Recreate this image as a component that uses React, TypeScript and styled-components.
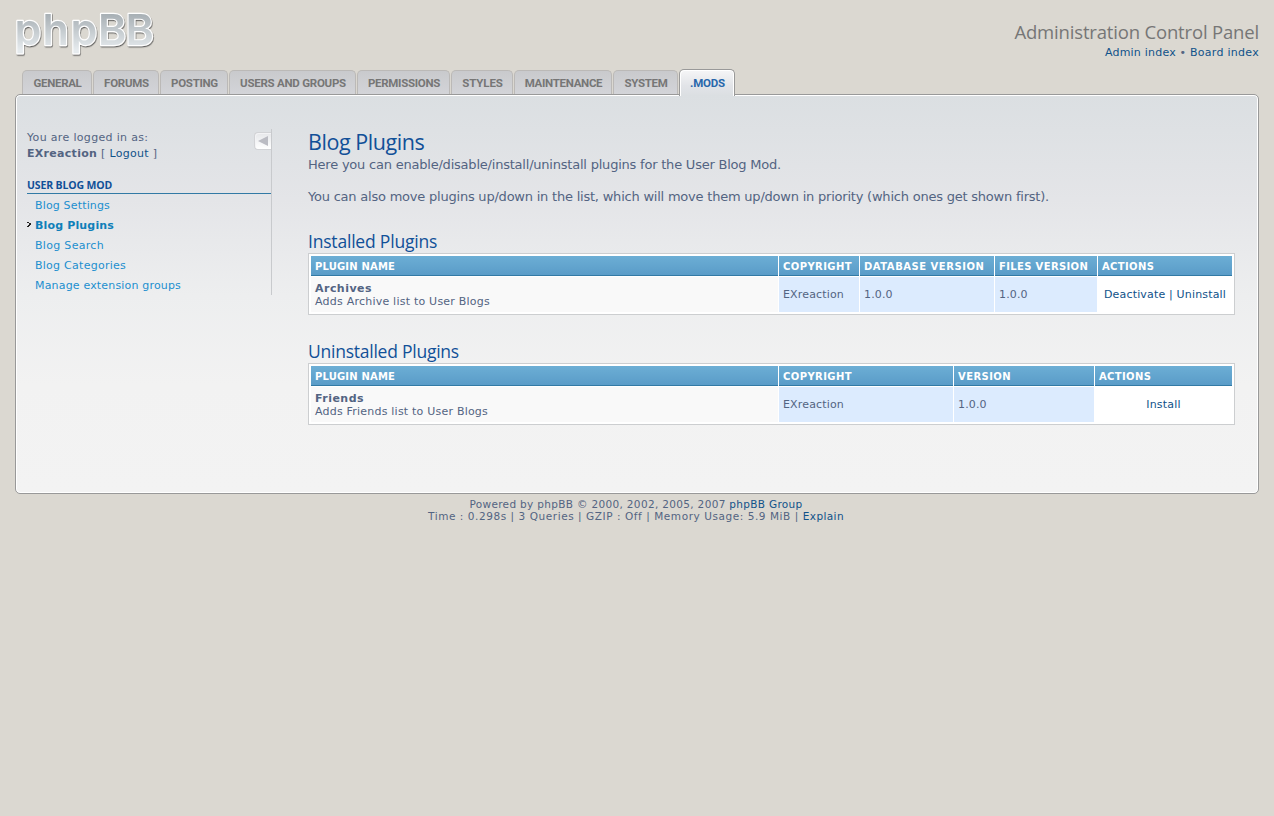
import React from "react";
import styled, { createGlobalStyle, css } from "styled-components";

const verdana = `Verdana, "DejaVu Sans", sans-serif`;
const trebuchet = `"Trebuchet MS", "Open Sans", sans-serif`;

const GlobalStyle = createGlobalStyle`
  * { box-sizing: border-box; }
  body {
    margin: 0;
    background: #dbd8d1;
    color: #536482;
    font: 11px/16px ${verdana};
  }
  h1, h2, h3, p, ul { margin: 0; padding: 0; font-weight: 400; }
  ul { list-style: none; }
`;

interface Tracked {
  $track?: number;
}
const tracking = css<Tracked>`
  letter-spacing: ${({ $track = 0.2 }) => $track}px;
  white-space: nowrap;
`;

const Page = styled.div`
  padding: 0 15px;
`;

const Header = styled.header`
  display: flex;
  justify-content: space-between;
  height: 69px;
`;

const LogoSvg = styled.svg`
  display: block;
  margin: 4px 0 0 -3px;
  overflow: visible;
`;

const HeaderInfo = styled.div`
  padding-top: 21px;
  text-align: right;
`;

const SiteTitle = styled.h1<Tracked>`
  ${tracking}
  height: 24px;
  color: #767676;
  font: 18.5px/22px ${trebuchet};
`;

const HeaderLinks = styled.p<Tracked>`
  ${tracking}
`;

const Link = styled.a<Tracked>`
  ${tracking}
  color: #105289;
  text-decoration: none;
`;

const Tabs = styled.nav`
  display: flex;
  align-items: flex-end;
  gap: 1px;
  height: 25px;
  padding-left: 7px;
`;

const Tab = styled.a<{ $width: number; $active?: boolean } & Tracked>`
  ${tracking}
  position: relative;
  z-index: 1;
  width: ${({ $width }) => $width}px;
  height: 24px;
  padding-left: 1px;
  border: 1px solid #bbb9b7;
  border-bottom: 0;
  border-radius: 5px 5px 0 0;
  background: linear-gradient(#c9cacd, #d3d4d8);
  color: #767676;
  font: 700 11.5px/24px Roboto, Arial, sans-serif;
  text-align: center;
  ${({ $active }) =>
    $active &&
    css`
      height: 27px;
      margin-bottom: -2px;
      border-color: #999;
      background: linear-gradient(#f6f6f7, #e2e4e8 60%, #dbdfe2);
      box-shadow: inset 1px 1px 0 #fff, inset -1px 0 0 #fff;
      color: #2867ab;
      line-height: 26px;
    `}
`;

const Panel = styled.main`
  display: flex;
  height: 400px;
  padding: 33px 22px 0 10px;
  border: 1px solid #999;
  border-radius: 5px;
  background: linear-gradient(#dbdfe2, #e4e5e8 105px, #edeeef 200px, #f2f2f2 290px, #f3f3f3);
  box-shadow: inset 0 0 0 1px #fff;
`;

const Sidebar = styled.aside`
  position: relative;
  width: 246px;
  height: 167px;
  padding: 1px 0 0 1px;
`;

const SidebarInner = styled.div`
  height: 166px;
  padding-top: 1px;
  border-right: 1px solid #c8cacd;
`;

const CollapseButton = styled.button`
  position: absolute;
  top: 4px;
  right: 1px;
  width: 17px;
  height: 18px;
  padding: 0;
  border: 1px solid #d2d3d6;
  border-right: 0;
  border-radius: 4px 0 0 4px;
  background: linear-gradient(#e6e7ea, #fff);
  box-shadow: inset 1px 1px 0 #f3f3f5;
  svg { display: block; margin: 0 0 0 3px; }
`;

const Text = styled.p<Tracked>`
  ${tracking}
`;

const Bold = styled.strong<Tracked>`
  ${tracking}
`;

const MenuHeading = styled.h3<Tracked>`
  ${tracking}
  margin-top: 15px;
  height: 17px;
  border-bottom: 1px solid #327aa5;
  color: #115098;
  font: 700 10.5px/16px Tahoma, "Open Sans", sans-serif;
`;

const Menu = styled.ul`
  padding-top: 2px;
`;

const MenuItem = styled.li<{ $active?: boolean } & Tracked>`
  ${tracking}
  display: flex;
  align-items: center;
  height: 20px;
  padding-left: ${({ $active }) => ($active ? 0 : 8)}px;
  color: ${({ $active }) => ($active ? "#0f7fb9" : "#1c8fcf")};
  font-weight: ${({ $active }) => ($active ? 700 : 400)};
  svg { width: 8px; height: 7px; margin-top: -3px; }
`;

const Content = styled.section`
  flex: 1;
  padding: 1px 0 0 36px;
`;

const PageTitle = styled.h2<Tracked>`
  ${tracking}
  color: #115098;
  font: 21.5px/25px ${trebuchet};
  height: 28px;
`;

const Intro = styled.p<Tracked>`
  ${tracking}
  font-size: 13px;
  margin-bottom: 16px;
`;

const SectionTitle = styled.h3<Tracked>`
  ${tracking}
  margin-top: 27px;
  height: 21px;
  color: #115098;
  font: 17.5px/19px ${trebuchet};
`;

const Table = styled.div<{ $columns: string }>`
  display: grid;
  grid-template-columns: ${({ $columns }) => $columns};
  grid-template-rows: 20px 35px;
  gap: 1px;
  width: 927px;
  padding: 2px;
  border: 1px solid #ccced0;
  background: #fff;
`;

const HeadCell = styled.div<Tracked>`
  ${tracking}
  padding-left: 4px;
  border-bottom: 1px solid #327aa5;
  background: linear-gradient(#6caed5, #5a9cc8);
  color: #fff;
  font-size: 10px;
  font-weight: 700;
  line-height: 21px;
`;

const cellColors = { plain: "#f9f9f9", tinted: "#dcebfe", action: "#fff" };

const Cell = styled.div<{ $kind: keyof typeof cellColors }>`
  display: flex;
  flex-direction: column;
  justify-content: center;
  align-items: ${({ $kind }) => ($kind === "action" ? "center" : "flex-start")};
  padding-left: ${({ $kind }) => ({ plain: 4, tinted: 4, action: 0 })[$kind]}px;
  background: ${({ $kind }) => cellColors[$kind]};
  line-height: 13px;
`;

const Footer = styled.footer`
  padding: 4px 2px 0 0;
  text-align: center;
  font-size: 10.5px;
  line-height: 12px;
`;

const Logo = () => (
  <LogoSvg width="150" height="62" viewBox="12 4 150 62">
    <defs>
      <linearGradient id="silver" gradientUnits="userSpaceOnUse" x1="0" y1="12" x2="0" y2="50">
        <stop offset="0" stopColor="#a4acb1" />
        <stop offset="1" stopColor="#e6ebee" />
      </linearGradient>
      <filter id="drop" x="-10%" y="-10%" width="120%" height="130%">
        <feDropShadow dx="0.6" dy="1.2" stdDeviation="0.7" floodColor="#444" floodOpacity="0.8" />
      </filter>
    </defs>
    <g
      filter="url(#drop)"
      fill="url(#silver)"
      stroke="#fff"
      strokeWidth="2.4"
      strokeLinejoin="round"
      paintOrder="stroke"
      fontFamily="Inter, sans-serif"
      fontWeight="600"
      fontSize="43"
    >
      <text y="44.5">
        <tspan x="14.6">p</tspan>
        <tspan x="42.4">h</tspan>
        <tspan x="70.4">p</tspan>
        <tspan x="98">B</tspan>
        <tspan x="125.6">B</tspan>
      </text>
    </g>
  </LogoSvg>
);

const tabs = [
  { label: "GENERAL", width: 70, track: -0.3 },
  { label: "FORUMS", width: 66, track: -0.25 },
  { label: "POSTING", width: 68, track: -0.3 },
  { label: "USERS AND GROUPS", width: 127, track: -0.25 },
  { label: "PERMISSIONS", width: 93, track: -0.3 },
  { label: "STYLES", width: 62, track: -0.15 },
  { label: "MAINTENANCE", width: 98, track: -0.3 },
  { label: "SYSTEM", width: 65, track: -0.3 },
  { label: ".MODS", width: 56, track: -0.2, active: true },
];

const menu = [
  { label: "Blog Settings", track: 0.16 },
  { label: "Blog Plugins", track: 0.16, active: true },
  { label: "Blog Search", track: 0.31 },
  { label: "Blog Categories", track: 0.26 },
  { label: "Manage extension groups", track: 0.175 },
];

export default function App() {
  return (
    <>
      <GlobalStyle />
      <Page>
        <Header>
          <Logo />
          <HeaderInfo>
            <SiteTitle $track={-0.17}>Administration Control Panel</SiteTitle>
            <HeaderLinks>
              <Link $track={0.214}>Admin index</Link> • <Link $track={0.28}>Board index</Link>
            </HeaderLinks>
          </HeaderInfo>
        </Header>
        <Tabs>
          {tabs.map((t) => (
            <Tab key={t.label} $width={t.width} $track={t.track} $active={t.active}>
              {t.label}
            </Tab>
          ))}
        </Tabs>
        <Panel>
          <Sidebar>
            <SidebarInner>
              <Text $track={0.33}>You are logged in as:</Text>
              <Text $track={0.3}>
                <Bold $track={0.3}>EXreaction</Bold> [ <Link $track={0.3}>Logout</Link> ]
              </Text>
              <MenuHeading $track={-0.15}>USER BLOG MOD</MenuHeading>
              <Menu>
                {menu.map((m) => (
                  <MenuItem key={m.label} $track={m.track} $active={m.active}>
                    {m.active && (
                      <svg viewBox="0 0 8 7" fill="#222" shapeRendering="crispEdges">
                        <path d="M0 1h2v1H0zM2 2h2v2H2zM0 5h2v1H0zM1 4h2v1H1z" />
                      </svg>
                    )}
                    {m.label}
                  </MenuItem>
                ))}
              </Menu>
            </SidebarInner>
            <CollapseButton aria-label="Collapse menu">
              <svg width="10" height="10" viewBox="0 0 10 10" fill="#bbbcc3">
                <path d="M0 5L10 0v10z" />
              </svg>
            </CollapseButton>
          </Sidebar>
          <Content>
            <PageTitle $track={-0.45}>Blog Plugins</PageTitle>
            <Intro $track={-0.215}>
              Here you can enable/disable/install/uninstall plugins for the User Blog Mod.
            </Intro>
            <Intro $track={-0.217}>
              You can also move plugins up/down in the list, which will move them up/down in priority
              (which ones get shown first).
            </Intro>
            <SectionTitle $track={-0.2}>Installed Plugins</SectionTitle>
            <Table $columns="467px 80px 134px 102px 134px">
              <HeadCell $track={0.17}>PLUGIN NAME</HeadCell>
              <HeadCell $track={0.42}>COPYRIGHT</HeadCell>
              <HeadCell $track={0.52}>DATABASE VERSION</HeadCell>
              <HeadCell $track={0.36}>FILES VERSION</HeadCell>
              <HeadCell $track={0.36}>ACTIONS</HeadCell>
              <Cell $kind="plain">
                <Bold $track={0.47}>Archives</Bold>
                <Text $track={0.226}>Adds Archive list to User Blogs</Text>
              </Cell>
              <Cell $kind="tinted">
                <Text $track={0.16}>EXreaction</Text>
              </Cell>
              <Cell $kind="tinted">
                <Text $track={0.15}>1.0.0</Text>
              </Cell>
              <Cell $kind="tinted">
                <Text $track={0.15}>1.0.0</Text>
              </Cell>
              <Cell $kind="action">
                <Link $track={0.17}>Deactivate | Uninstall</Link>
              </Cell>
            </Table>
            <SectionTitle $track={-0.24}>Uninstalled Plugins</SectionTitle>
            <Table $columns="467px 174px 140px 137px">
              <HeadCell $track={0.17}>PLUGIN NAME</HeadCell>
              <HeadCell $track={0.42}>COPYRIGHT</HeadCell>
              <HeadCell $track={0.42}>VERSION</HeadCell>
              <HeadCell $track={0.36}>ACTIONS</HeadCell>
              <Cell $kind="plain">
                <Bold $track={0.47}>Friends</Bold>
                <Text $track={0.213}>Adds Friends list to User Blogs</Text>
              </Cell>
              <Cell $kind="tinted">
                <Text $track={0.16}>EXreaction</Text>
              </Cell>
              <Cell $kind="tinted">
                <Text $track={0.15}>1.0.0</Text>
              </Cell>
              <Cell $kind="action">
                <Link $track={0.2}>Install</Link>
              </Cell>
            </Table>
          </Content>
        </Panel>
        <Footer>
          <Text $track={0.33}>
            Powered by phpBB © 2000, 2002, 2005, 2007 <Link $track={0.32}>phpBB Group</Link>
          </Text>
          <Text $track={0.56}>
            Time : 0.298s | 3 Queries | GZIP : Off | Memory Usage: 5.9 MiB |{" "}
            <Link $track={0.4}>Explain</Link>
          </Text>
        </Footer>
      </Page>
    </>
  );
}
